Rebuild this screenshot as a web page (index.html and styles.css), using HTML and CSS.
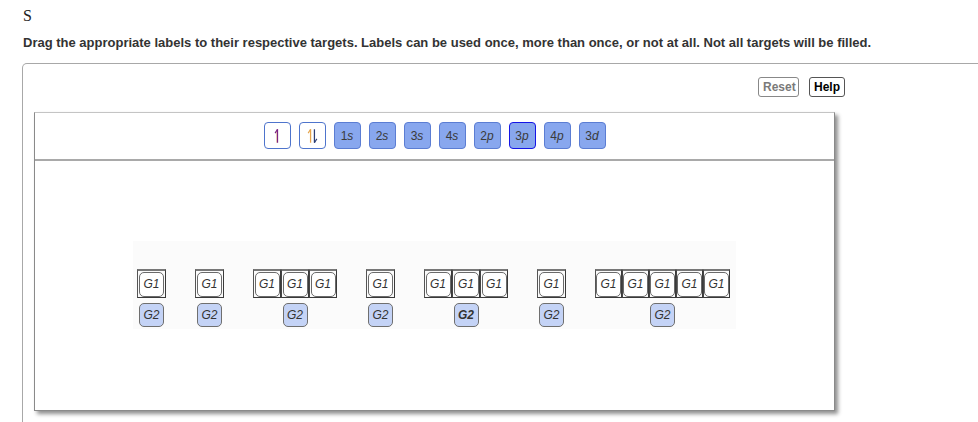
FILE: index.html
```html
<!DOCTYPE html>
<html>
<head>
<meta charset="utf-8">
<link rel="stylesheet" href="styles.css">
</head>
<body>
<div class="title">S</div>
<p class="instr">Drag the appropriate labels to their respective targets. Labels can be used once, more than once, or not at all. Not all targets will be filled.</p>
<div class="frame">
  <div class="activity">
    <div class="actions">
      <button class="btn reset">Reset</button>
      <button class="btn help">Help</button>
    </div>
    <div class="panel">
      <div class="toolbar">
        <div class="tile arrow">
          <svg width="26" height="26" viewBox="0 0 26 26"><path d="M12.4 8 V20" stroke="#e6a64a" stroke-width="0.7" fill="none"/><path d="M13 6 V20" stroke="#7b2383" stroke-width="1.3" fill="none"/><path d="M13 6 L10.5 10" stroke="#7b2383" stroke-width="1.2" fill="none"/></svg>
        </div>
        <div class="tile arrow">
          <svg width="26" height="26" viewBox="0 0 26 26"><path d="M11 6 V20" stroke="#e5a34a" stroke-width="1.3" fill="none"/><path d="M11 6 L8.5 10" stroke="#e5a34a" stroke-width="1.2" fill="none"/><path d="M15 6 V20" stroke="#2b3d74" stroke-width="1.3" fill="none"/><path d="M15 20 L17.5 16" stroke="#2b3d74" stroke-width="1.2" fill="none"/></svg>
        </div>
        <div class="tile orb">1<i>s</i></div>
        <div class="tile orb">2<i>s</i></div>
        <div class="tile orb">3<i>s</i></div>
        <div class="tile orb">4<i>s</i></div>
        <div class="tile orb">2<i>p</i></div>
        <div class="tile orb sel">3<i>p</i></div>
        <div class="tile orb">4<i>p</i></div>
        <div class="tile orb">3<i>d</i></div>
      </div>
      <div class="stage">
        <div class="targets">
          <div class="group">
            <div class="slots"><div class="slot one"><span class="g1">G1</span></div></div>
            <span class="g2">G2</span>
          </div>
          <div class="group">
            <div class="slots"><div class="slot one"><span class="g1">G1</span></div></div>
            <span class="g2">G2</span>
          </div>
          <div class="group">
            <div class="slots"><div class="slot"><span class="g1">G1</span></div><div class="slot"><span class="g1">G1</span></div><div class="slot"><span class="g1">G1</span></div></div>
            <span class="g2">G2</span>
          </div>
          <div class="group">
            <div class="slots"><div class="slot one"><span class="g1">G1</span></div></div>
            <span class="g2">G2</span>
          </div>
          <div class="group">
            <div class="slots"><div class="slot"><span class="g1">G1</span></div><div class="slot"><span class="g1">G1</span></div><div class="slot"><span class="g1">G1</span></div></div>
            <span class="g2 strong">G2</span>
          </div>
          <div class="group">
            <div class="slots"><div class="slot one"><span class="g1">G1</span></div></div>
            <span class="g2">G2</span>
          </div>
          <div class="group">
            <div class="slots five"><div class="slot"><span class="g1">G1</span></div><div class="slot"><span class="g1">G1</span></div><div class="slot"><span class="g1">G1</span></div><div class="slot"><span class="g1">G1</span></div><div class="slot"><span class="g1">G1</span></div></div>
            <span class="g2">G2</span>
          </div>
        </div>
      </div>
    </div>
  </div>
</div>
</body>
</html>
```
FILE: styles.css
```css
html, body {
  margin: 0;
  padding: 0;
  background: #fff;
  overflow: hidden;
}
body {
  font-family: "Liberation Sans", Arial, sans-serif;
  color: #333;
  width: 978px;
  height: 422px;
}
.title {
  font-family: "Liberation Serif", "Times New Roman", serif;
  font-size: 16px;
  line-height: 18px;
  color: #222;
  padding: 7px 0 0 23px;
}
.instr {
  margin: 10px 0 0 23px;
  font-size: 13px;
  line-height: 15px;
  font-weight: bold;
  color: #333;
}
.frame {
  margin: 13px -20px 0 22px;
  border: 1px solid #a8a8a8;
  border-bottom: none;
  border-radius: 5px 0 0 0;
  height: 358px;
  padding: 0 0 0 11px;
}
.activity {
  width: 811px;
}
.actions {
  display: flex;
  justify-content: flex-end;
  gap: 10px;
  padding-top: 13px;
  height: 20px;
}
.btn {
  font-family: "Liberation Sans", Arial, sans-serif;
  font-size: 12px;
  font-weight: bold;
  height: 20px;
  padding: 0 4px;
  background: #fff;
  border: 1px solid #888;
  border-radius: 3px;
  line-height: 18px;
}
.reset { color: #7a7a7a; width: 41px; }
.help { color: #000; border-color: #555; width: 36px; }
.panel {
  margin-top: 15px;
  width: 799px;
  height: 297px;
  border: 1px solid #c4c4c4;
  border-left-color: #8a8a8a;
  border-bottom-color: #8a8a8a;
  border-right-color: #8a8a8a;
  box-shadow: 3px 3px 4px #8f8f8f;
  background: #fff;
}
.toolbar {
  border-bottom: 2px solid #a9a9a9;
  display: flex;
  justify-content: center;
  align-items: flex-start;
  gap: 8px;
  box-sizing: border-box;
  height: 48px;
  padding-top: 9px;
}
.tile {
  width: 27px;
  height: 27px;
  box-sizing: border-box;
  border-radius: 4px;
  display: flex;
  align-items: center;
  justify-content: center;
  font-size: 12px;
}
.arrow {
  background: #fff;
  border: 1px solid #4e74cc;
}
.arrow svg { display: block; }
.orb {
  background: #88a7ee;
  border: 1px solid #5b7dd3;
  color: #3a3a3a;
}
.orb i { font-style: italic; }
.sel { border-color: #1515e6; }
.stage {
  padding-top: 80px;
  display: flex;
  justify-content: center;
}
.targets {
  width: 603px;
  height: 88px;
  box-sizing: border-box;
  background: #fbfbfb;
  display: flex;
  gap: 29px;
  padding: 28px 0 0 4px;
}
.group {
  display: flex;
  flex-direction: column;
  align-items: center;
  gap: 5px;
}
.slots {
  display: flex;
}
.slot {
  width: 28px;
  height: 29px;
  box-sizing: border-box;
  border: 1px solid #3a3a3a;
  border-top: 2px solid #777;
  border-left-color: #555;
  display: flex;
  align-items: center;
  justify-content: center;
}
.slot.one { width: 29px; }
.slots .slot + .slot { border-left: 1px solid #444; }
.five .slot { width: 27px; }
.g1 {
  width: 25px;
  height: 25px;
  box-sizing: border-box;
  background: #fff;
  border: 1px solid #6a6a6a;
  border-radius: 5px;
  display: flex;
  align-items: center;
  justify-content: center;
  font-size: 12px;
  font-style: italic;
  color: #333;
}
.g2 {
  width: 25px;
  height: 24px;
  box-sizing: border-box;
  background: #c4d3f6;
  border: 1px solid #6f6f6f;
  border-radius: 5px;
  display: flex;
  align-items: center;
  justify-content: center;
  font-size: 12px;
  font-style: italic;
  color: #333;
}
.g2.strong { font-weight: bold; }
```
